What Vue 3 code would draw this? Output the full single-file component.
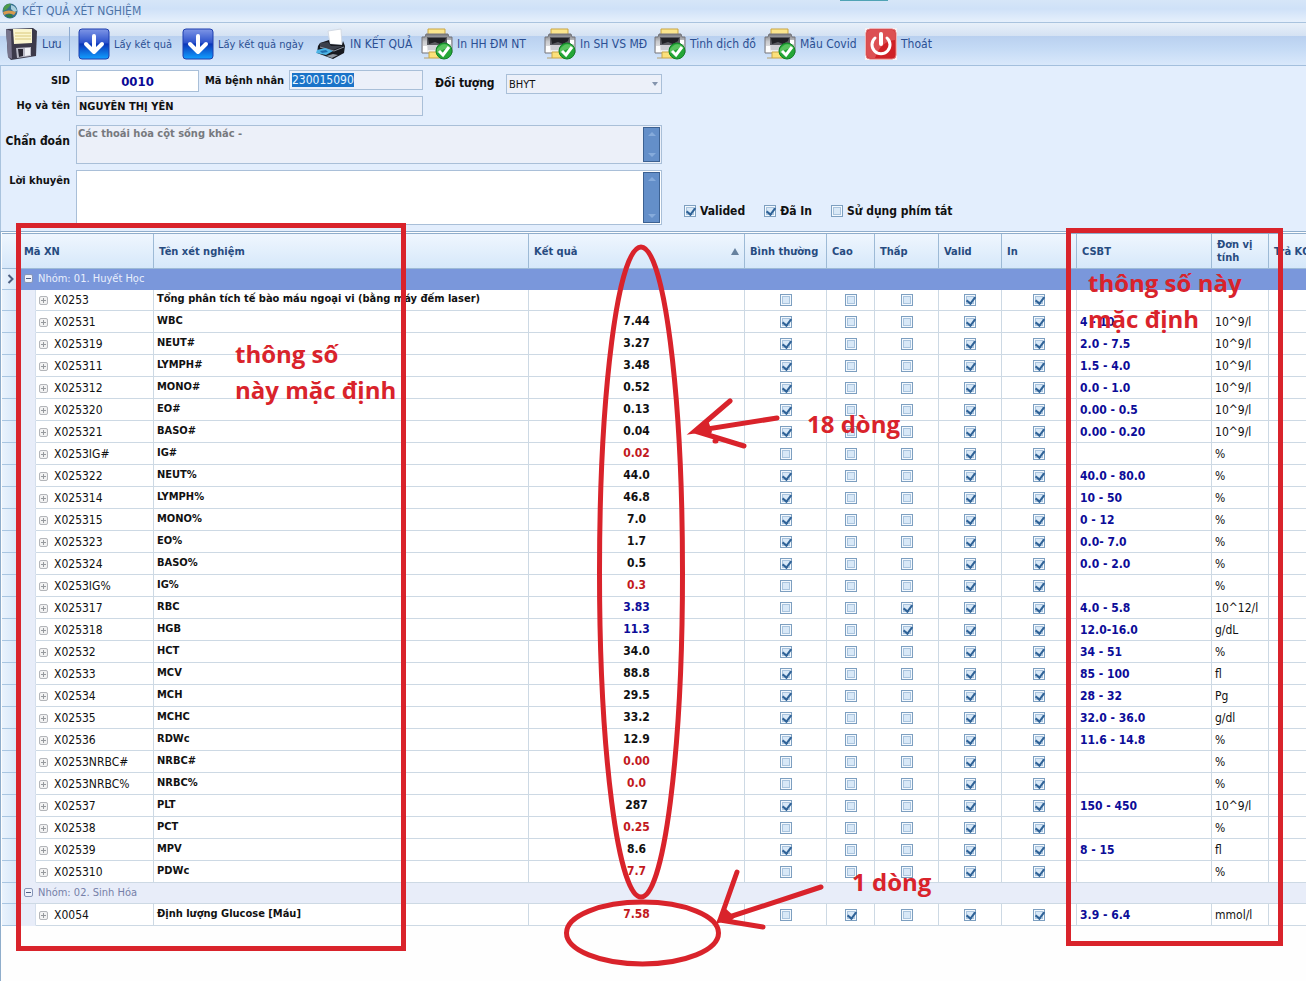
<script setup>
import { onMounted, ref } from 'vue'

const patientInput = ref(null)
const patientId = ref('230015090')
const sid = ref('0010')
const fullName = ref('NGUYỄN THỊ YẾN')
const diagnosis = ref('Các thoái hóa cột sống khác -')
const advice = ref('')
const validated = ref(true)
const printed = ref(true)
const shortcuts = ref(false)

const tools = [
  { icon: 'down', label: 'Lấy kết quả' },
  { icon: 'down', label: 'Lấy kết quả ngày' },
  { icon: 'inkjet', label: 'IN KẾT QUẢ' },
  { icon: 'printer', label: 'In HH ĐM NT' },
  { icon: 'printer', label: 'In SH VS MĐ' },
  { icon: 'printer', label: 'Tinh dịch đồ' },
  { icon: 'printer', label: 'Mẫu Covid' },
  { icon: 'power', label: 'Thoát' }
]

// flag: n = normal, h = high, l = low, x = outside any range
const row = (code, name, value, flag, range, unit) => ({
  code, name, value, range, unit,
  tone: flag === 'l' ? 'low' : flag === 'x' || flag === 'h' ? 'alert' : '',
  checks: { 'Bình thường': flag === 'n', Cao: flag === 'h', 'Thấp': flag === 'l', Valid: true, In: true }
})

const groups = ref([
  {
    title: 'Nhóm: 01. Huyết Học',
    active: true,
    rows: [
      row('X0253', 'Tổng phân tích tế bào máu ngoại vi (bằng máy đếm laser)', '', '', '', ''),
      row('X02531', 'WBC', '7.44', 'n', '4 - 10', '10^9/l'),
      row('X025319', 'NEUT#', '3.27', 'n', '2.0 - 7.5', '10^9/l'),
      row('X025311', 'LYMPH#', '3.48', 'n', '1.5 - 4.0', '10^9/l'),
      row('X025312', 'MONO#', '0.52', 'n', '0.0 - 1.0', '10^9/l'),
      row('X025320', 'EO#', '0.13', 'n', '0.00 - 0.5', '10^9/l'),
      row('X025321', 'BASO#', '0.04', 'n', '0.00 - 0.20', '10^9/l'),
      row('X0253IG#', 'IG#', '0.02', 'x', '', '%'),
      row('X025322', 'NEUT%', '44.0', 'n', '40.0 - 80.0', '%'),
      row('X025314', 'LYMPH%', '46.8', 'n', '10 - 50', '%'),
      row('X025315', 'MONO%', '7.0', 'n', '0 - 12', '%'),
      row('X025323', 'EO%', '1.7', 'n', '0.0- 7.0', '%'),
      row('X025324', 'BASO%', '0.5', 'n', '0.0 - 2.0', '%'),
      row('X0253IG%', 'IG%', '0.3', 'x', '', '%'),
      row('X025317', 'RBC', '3.83', 'l', '4.0 - 5.8', '10^12/l'),
      row('X025318', 'HGB', '11.3', 'l', '12.0-16.0', 'g/dL'),
      row('X02532', 'HCT', '34.0', 'n', '34 - 51', '%'),
      row('X02533', 'MCV', '88.8', 'n', '85 - 100', 'fl'),
      row('X02534', 'MCH', '29.5', 'n', '28 - 32', 'Pg'),
      row('X02535', 'MCHC', '33.2', 'n', '32.0 - 36.0', 'g/dl'),
      row('X02536', 'RDWc', '12.9', 'n', '11.6 - 14.8', '%'),
      row('X0253NRBC#', 'NRBC#', '0.00', 'x', '', '%'),
      row('X0253NRBC%', 'NRBC%', '0.0', 'x', '', '%'),
      row('X02537', 'PLT', '287', 'n', '150 - 450', '10^9/l'),
      row('X02538', 'PCT', '0.25', 'x', '', '%'),
      row('X02539', 'MPV', '8.6', 'n', '8 - 15', 'fl'),
      row('X025310', 'PDWc', '7.7', 'x', '', '%')
    ]
  },
  {
    title: 'Nhóm: 02. Sinh Hóa',
    active: false,
    rows: [row('X0054', 'Định lượng Glucose [Máu]', '7.58', 'h', '3.9 - 6.4', 'mmol/l')]
  }
])

onMounted(() => {
  patientInput.value.focus()
  patientInput.value.select()
})
</script>

<template>
  <main class="window">
    <header class="titlebar">
      <svg class="globe" viewBox="0 0 16 16" aria-hidden="true">
        <circle cx="8" cy="8" r="7.500" fill="#356f8f" />
        <path d="M2 4Q5 0 9 1L7 4 4 7 1 8Z" fill="#4c9a4a" />
        <path d="M9 2Q14 3 15 8L12 9 9 6Z" fill="#a9cfdc" />
        <path d="M1 9Q6 6 14 9L12 12Q7 9 2 12Z" fill="#d99a4c" />
        <path d="M4 12L9 11 11 14Q7 16 4 13Z" fill="#2f7d43" />
      </svg>
      <h1>KẾT QUẢ XÉT NGHIỆM</h1>
      <span class="accent"></span>
    </header>

    <nav class="toolbar">
      <button type="button" class="tool save">
        <svg viewBox="0 0 32 32" aria-hidden="true">
          <path d="M0 1L27 0 31 3 30 28 5 32 2 29Z" fill="#3c3a4a" />
          <path d="M0 1L5 3 6 31 2 29Z" fill="#77748c" />
          <path d="M7 1L26 1 26 15 8 16Z" fill="#fbf6cf" />
          <path d="M9 5H25M9 8H25M9 11H25" stroke="#d9c87c" stroke-width="1" />
          <path d="M10 20L25 19 25 28 11 30Z" fill="#b9bac6" />
          <path d="M12 21L17 21 17 28 13 29Z" fill="#2a2834" />
          <path d="M19 20L24 20 24 27 19 28Z" fill="#eef0f5" />
        </svg>
        <span>Lưu</span>
      </button>
      <span class="divider"></span>
      <button v-for="(tool, i) in tools" :key="i" type="button" class="tool" :class="tool.icon">
        <svg v-if="tool.icon === 'down'" viewBox="0 0 32 32" aria-hidden="true">
          <defs>
            <linearGradient :id="'down' + i" x1="0" y1="0" x2="0" y2="1">
              <stop offset="0" stop-color="#7f96e6" />
              <stop offset=".46" stop-color="#2c52cc" />
              <stop offset=".5" stop-color="#0a35b8" />
              <stop offset="1" stop-color="#12a0ff" />
            </linearGradient>
          </defs>
          <rect x="1" y="1" width="30" height="30" rx="3" :fill="`url(#down${i})`" stroke="#1f3fae" />
          <path d="M16 8V23M8 16L16 24 24 16" fill="none" stroke="#fff" stroke-width="4" stroke-linecap="round" stroke-linejoin="round" />
        </svg>
        <svg v-else-if="tool.icon === 'inkjet'" viewBox="0 0 30 32" aria-hidden="true">
          <path d="M12 3L25 1 26 17 14 16Z" fill="#fff" stroke="#d3dae4" />
          <path d="M4 15L13 12 14 16 26 17 27 13 29 18 28 25 17 31 1 25 2 18Z" fill="#17191f" />
          <path d="M4 15L12 14 15 18 27 18 17 22 4 20Z" fill="#3b404b" />
          <path d="M4 19L18 23 28 19" fill="none" stroke="#8b929f" />
          <path d="M1 22L9 20 17 23 10 27 0 25Z" fill="#4db4e6" />
          <path d="M4 23L10 22 12 24 6 25Z" fill="#1f6fae" />
          <path d="M10 28L17 26 22 27 16 30Z" fill="#8e959f" />
        </svg>
        <svg v-else-if="tool.icon === 'printer'" viewBox="0 0 32 32" aria-hidden="true">
          <defs>
            <linearGradient :id="'body' + i" x1="0" y1="0" x2="0" y2="1">
              <stop offset="0" stop-color="#77787c" />
              <stop offset=".4" stop-color="#c9cacd" />
              <stop offset="1" stop-color="#f7f7f8" />
            </linearGradient>
          </defs>
          <path d="M7 1H24V7H7Z" fill="#fbe68d" stroke="#c9a545" />
          <path d="M5 6H27L28 9H31V25H1V9H4Z" :fill="`url(#body${i})`" stroke="#77777c" />
          <path d="M6 9H26V17H6Z" fill="#5a5b60" />
          <path d="M7 10H25L24 13 19 16 14 14 8 16Z" fill="#202125" />
          <path d="M7 17H25V22H7Z" fill="#cfd0d4" />
          <path d="M2 18H6V24H2ZM26 12H30V16H26Z" fill="#fff" />
          <path d="M8 24H20V30H8Z" fill="#fbe07a" stroke="#c9a545" />
          <path d="M3 30H8" stroke="#b6a06a" />
          <circle cx="23" cy="23" r="8" fill="#24a637" stroke="#118126" />
          <path d="M16 21Q23 12 30 20Q23 20 16 25Z" fill="#6fd06f" opacity=".7" />
          <path d="M18 23L22 27 28 19" fill="none" stroke="#fff" stroke-width="3" />
        </svg>
        <svg v-else viewBox="0 0 32 32" aria-hidden="true">
          <rect width="32" height="32" fill="#f8f1f3" />
          <rect x="1" y="1" width="30" height="30" rx="4" fill="#cf2025" stroke="#e0787a" />
          <path d="M2 5Q2 2 5 2H27Q30 2 30 5V12Q16 13 10 30H5Q2 30 2 27Z" fill="#e36a6b" opacity=".65" />
          <path d="M10 10A9 9 0 1 0 22 10" fill="none" stroke="#fff" stroke-width="3" stroke-linecap="round" />
          <path d="M16 6V16" stroke="#fff" stroke-width="4" stroke-linecap="round" />
        </svg>
        <span>{{ tool.label }}</span>
      </button>
    </nav>

    <form class="panel" @submit.prevent>
      <div class="line top-line">
        <label for="sid" class="lead">SID</label>
        <input id="sid" v-model="sid" class="box sid" type="text" />
        <label for="patient" class="mid">Mã bệnh nhân</label>
        <input id="patient" ref="patientInput" v-model="patientId" class="box patient" type="text" readonly />
        <label for="subject" class="subject-label">Đối tượng</label>
        <span class="subject">
          <select id="subject"><option>BHYT</option></select>
          <svg viewBox="0 0 6 4" aria-hidden="true"><path d="M0 0H6L3 4Z" fill="#8494ad" /></svg>
        </span>
      </div>
      <div class="line name-line">
        <label for="fullname" class="lead">Họ và tên</label>
        <input id="fullname" v-model="fullName" class="box fullname" type="text" readonly />
      </div>
      <div class="line">
        <label for="diagnosis" class="lead large">Chẩn đoán</label>
        <div class="memo muted">
          <textarea id="diagnosis" v-model="diagnosis" readonly></textarea>
          <span class="scroll"><i class="up"></i><i class="down"></i></span>
        </div>
      </div>
      <div class="line">
        <label for="advice" class="lead">Lời khuyên</label>
        <div class="memo tall">
          <textarea id="advice" v-model="advice"></textarea>
          <span class="scroll"><i class="up"></i><i class="down"></i></span>
        </div>
        <div class="options">
          <label><input v-model="validated" type="checkbox" />Valided</label>
          <label><input v-model="printed" type="checkbox" />Đã In</label>
          <label><input v-model="shortcuts" type="checkbox" />Sử dụng phím tắt</label>
        </div>
      </div>
    </form>

    <section class="grid">
      <table>
        <colgroup>
          <col class="c-mark" /><col class="c-indent" /><col class="c-code" /><col class="c-name" /><col class="c-result" />
          <col class="c-normal" /><col class="c-high" /><col class="c-low" /><col class="c-valid" /><col class="c-print" />
          <col class="c-range" /><col class="c-unit" /><col />
        </colgroup>
        <thead>
          <tr>
            <th></th>
            <th colspan="2" class="first">Mã XN</th>
            <th>Tên xét nghiệm</th>
            <th><span class="sorted">Kết quả<i></i></span></th>
            <th>Bình thường</th>
            <th>Cao</th>
            <th>Thấp</th>
            <th>Valid</th>
            <th>In</th>
            <th>CSBT</th>
            <th>Đơn vị<br />tính</th>
            <th>Trả KQ</th>
          </tr>
        </thead>
        <tbody v-for="group in groups" :key="group.title">
          <tr class="group" :class="{ active: group.active }">
            <td class="mark">
              <svg v-if="group.active" viewBox="0 0 6 10" aria-hidden="true"><path d="M1 1L5 5 1 9" fill="none" stroke="#4c5f80" stroke-width="2" /></svg>
            </td>
            <td colspan="12" class="title">
              <button type="button" class="toggle open" aria-label="Thu gọn"></button>{{ group.title }}
            </td>
          </tr>
          <tr v-for="item in group.rows" :key="item.code" :class="{ heading: !item.value }">
            <td class="mark"></td>
            <td class="indent"></td>
            <td class="code"><button type="button" class="toggle" aria-label="Mở rộng"></button>{{ item.code }}</td>
            <td class="name">{{ item.name }}</td>
            <td class="result" :class="item.tone">{{ item.value }}</td>
            <td v-for="(on, key) in item.checks" :key="key" class="check">
              <input v-model="item.checks[key]" type="checkbox" :aria-label="item.code + ' ' + key" />
            </td>
            <td class="range">{{ item.range }}</td>
            <td class="unit">{{ item.unit }}</td>
            <td></td>
          </tr>
        </tbody>
      </table>
    </section>

    <svg class="marks" width="1306" height="981" aria-hidden="true">
      <g fill="none" stroke="#d9232b" stroke-width="5" stroke-linecap="round">
        <rect x="18.500" y="225.500" width="385" height="723" />
        <rect x="1068.500" y="230.500" width="212" height="713" />
        <ellipse cx="641" cy="572" rx="41.500" ry="325" />
        <ellipse cx="642.500" cy="933" rx="76" ry="31" />
        <path d="M777 418L695 431L730 401M695 431L744 446M715 441L716 441" />
        <path d="M821 887L720 920L737 872M720 920L763 927" />
      </g>
      <g fill="#d9232b">
        <path d="M693 432L708 420 712 432 708 437Z" />
        <path d="M717 921L725 908 735 917 730 922Z" />
      </g>
    </svg>
    <p class="note note-left">thông số<br />này mặc định</p>
    <p class="note note-right">thông số này<br />mặc định</p>
    <p class="note note-many">18 dòng</p>
    <p class="note note-one">1 dòng</p>
  </main>
</template>

<style>
body {
  margin: 0;
  background: #fefefe;
}
</style>

<style scoped>
* {
  box-sizing: border-box;
}
.window {
  position: relative;
  min-height: 100vh;
  overflow: hidden;
  display: flex;
  flex-direction: column;
  font-family: "DejaVu Sans Condensed", "DejaVu Sans", "Noto Sans", sans-serif;
  font-size: 12px;
  color: #111;
}
button, input, select, textarea {
  font: inherit;
  color: inherit;
  margin: 0;
}
.titlebar {
  position: relative;
  display: flex;
  align-items: center;
  gap: 4px;
  height: 23px;
  padding: 0 2px;
  border-bottom: 1px solid #a9c3de;
  background: linear-gradient(#d6e6f8, #cfe1f8 40%, #e6f0fc);
}
.titlebar h1 {
  margin: 0;
  font-size: 12px;
  font-weight: normal;
  color: #4d74a8;
}
.globe {
  width: 16px;
  height: 16px;
}
.accent {
  position: absolute;
  top: 0;
  left: 840px;
  width: 48px;
  height: 1px;
  background: #4fa3b5;
}
.toolbar {
  display: grid;
  grid-template-columns: 63px 9px 104px 134px 105px 123px 110px 110px 101px 1fr;
  align-items: center;
  height: 43px;
  padding-left: 6px;
  border-bottom: 1px solid #a3bfdd;
  background: linear-gradient(#e8f0f9, #d5e2f3 30%, #b9d0ef 31%, #c4daf5 60%, #d9e8fb);
}
.tool {
  display: flex;
  align-items: center;
  gap: 4px;
  padding: 0;
  border: 0;
  background: none;
  color: #2b4f93;
  white-space: nowrap;
}
.tool.down {
  font-size: 11px;
}
.tool svg {
  flex: none;
  width: 32px;
  height: 32px;
}
.tool.inkjet svg {
  width: 30px;
}
.divider {
  width: 1px;
  height: 34px;
  background: #8eabd0;
}
.panel {
  display: flex;
  flex-direction: column;
  height: 165px;
  padding-top: 4px;
  border-left: 1px solid #a9c3de;
  background: #e3eefd;
  font-weight: bold;
  font-size: 11px;
}
.line {
  display: flex;
  align-items: flex-start;
}
.line label {
  white-space: nowrap;
}
.top-line {
  height: 26px;
}
.lead {
  width: 69px;
  margin-right: 6px;
  line-height: 22px;
  text-align: right;
}
.lead.large {
  font-size: 12px;
  line-height: 32px;
}
.box {
  border: 1px solid #a9bfd8;
  border-radius: 0;
  background: #ecf0f9;
  outline: none;
}
.sid {
  width: 123px;
  height: 22px;
  background: #fff;
  color: #0a0a96;
  text-align: center;
  font-size: 13px;
}
.mid {
  width: 90px;
  padding-left: 6px;
  line-height: 22px;
}
.patient {
  width: 134px;
  height: 20px;
  padding: 0 2px;
  font-weight: normal;
  font-size: 12px;
}
.patient::selection {
  background: #1a73c8;
  color: #e8f6ff;
}
.subject-label {
  width: 83px;
  padding-left: 12px;
  font-size: 12px;
  line-height: 26px;
}
.subject {
  position: relative;
  margin-top: 4px;
}
.subject select {
  display: block;
  width: 156px;
  height: 20px;
  padding: 0 2px;
  border: 1px solid #a9bfd8;
  border-radius: 0;
  background: #ecf0f9;
  appearance: none;
  font-weight: normal;
}
.subject svg {
  position: absolute;
  right: 4px;
  top: 8px;
  width: 6px;
  height: 4px;
}
.name-line {
  height: 29px;
}
.name-line .lead {
  line-height: 20px;
}
.fullname {
  width: 347px;
  height: 20px;
  padding: 0 2px;
  font-size: 11px;
}
.memo {
  display: flex;
  width: 586px;
  height: 39px;
  margin-bottom: 6px;
  padding: 1px;
  border: 1px solid #a9bfd8;
  background: #fff;
}
.memo.muted {
  background: #ecf0f9;
  color: #77797e;
}
.memo.tall {
  height: 55px;
  margin: 0;
}
.memo textarea {
  flex: 1;
  padding: 0;
  border: 0;
  background: none;
  outline: none;
  resize: none;
  overflow: hidden;
  line-height: 14px;
}
.scroll {
  display: flex;
  flex-direction: column;
  align-items: center;
  justify-content: space-between;
  width: 17px;
  padding: 4px 0;
  border: 1px solid #3c6192;
  background: #648fc9;
}
.scroll i {
  border: 4px solid transparent;
}
.scroll .up {
  border-top: 0;
  border-bottom-color: #86abdb;
}
.scroll .down {
  border-bottom: 0;
  border-top-color: #86abdb;
}
.options {
  display: flex;
  align-items: center;
  gap: 19px;
  padding: 32px 0 0 22px;
  font-size: 12px;
}
.options label {
  display: flex;
  align-items: center;
  gap: 4px;
  line-height: 18px;
}
input[type="checkbox"] {
  display: block;
  flex: none;
  width: 12px;
  height: 12px;
  border: 1px solid #7d9fc0;
  appearance: none;
  background: #d8e8f7;
  box-shadow: inset 0 0 0 1px #f4f9fe, inset 0 0 0 2px #a9c4de;
}
input[type="checkbox"]:checked::before {
  content: "";
  display: block;
  width: 4px;
  height: 7px;
  margin: 0 0 0 3px;
  border: solid #2f6297;
  border-width: 0 2px 2px 0;
  transform: rotate(38deg);
}
.grid {
  flex: 1;
  padding: 1px 0 0 1px;
  border-top: 1px solid #8fadcb;
  border-left: 1px solid #8fadcb;
}
table {
  width: 100%;
  table-layout: fixed;
  border-collapse: separate;
  border-spacing: 0;
  border-top: 1px solid #8fadcb;
}
.c-mark { width: 18px; }
.c-indent { width: 16px; }
.c-code { width: 118px; }
.c-name { width: 375px; }
.c-result { width: 216px; }
.c-normal { width: 82px; }
.c-high { width: 48px; }
.c-low { width: 64px; }
.c-valid { width: 63px; }
.c-print { width: 75px; }
.c-range { width: 135px; }
.c-unit { width: 57px; }
th {
  height: 35px;
  padding: 0 5px;
  border-right: 1px solid #9dbad6;
  border-bottom: 1px solid #9dbad6;
  background: linear-gradient(#eff6fe, #d6e8fa);
  color: #274b80;
  font-size: 11px;
  line-height: 13px;
  text-align: left;
  white-space: nowrap;
}
th:last-child, td:last-child {
  border-right: 0;
}
th.first {
  padding-left: 4px;
}
.sorted {
  display: flex;
  justify-content: space-between;
  align-items: center;
}
.sorted i {
  border: 4px solid transparent;
  border-top: 0;
  border-bottom: 7px solid #66819f;
}
td {
  height: 22px;
  padding: 0 3px;
  border-right: 1px solid #cdd9e4;
  border-bottom: 1px solid #cdd9e4;
  background: #fff;
  line-height: 18px;
  white-space: nowrap;
}
.heading td, .group td {
  height: 21px;
}
.mark, .group .mark {
  padding: 0 0 0 5px;
  border-color: #a9c6e2;
  background: linear-gradient(90deg, #eaf3fd, #d3e5f8);
}
.mark svg {
  display: block;
  width: 7px;
  height: 10px;
}
.group .title {
  padding-left: 4px;
  border-right: 0;
  background: #e8edf9;
  color: #7680a8;
  font-size: 11px;
}
.group.active .title {
  border-color: #7a97db;
  background: #7a97db;
  color: #e9effc;
}
.indent {
  border-bottom-color: #e8edf9;
  border-right-color: #d5dfec;
  background: #e8edf9;
}
.toggle {
  display: inline-block;
  width: 9px;
  height: 9px;
  margin-right: 6px;
  padding: 0;
  border: 1px solid #b3b5b9;
  border-radius: 2px;
  background:
    linear-gradient(#96999d, #96999d) center / 5px 1px no-repeat,
    linear-gradient(#96999d, #96999d) center / 1px 5px no-repeat,
    #f2f2f2;
}
.toggle.open {
  margin-right: 5px;
  border-color: #8796b8;
  background: linear-gradient(#4f5f85, #4f5f85) center / 5px 1px no-repeat, #eef2fb;
}
.name, .result {
  padding-bottom: 2px;
  font-weight: bold;
}
.name {
  font-size: 11px;
}
.result {
  text-align: center;
}
.result.alert {
  color: #c2191d;
}
.result.low, .range {
  color: #0c0c98;
}
.range {
  font-weight: bold;
}
.check input {
  margin: 0 auto;
}
.marks {
  position: absolute;
  top: 0;
  left: 0;
  pointer-events: none;
}
.note {
  position: absolute;
  margin: 0;
  color: #d9232b;
  font-family: "Open Sans", "Noto Sans", sans-serif;
  font-size: 24px;
  font-weight: bold;
  line-height: 36px;
  white-space: nowrap;
  pointer-events: none;
}
.note-left { left: 235px; top: 336px; }
.note-right { left: 1088px; top: 265px; }
.note-many { left: 807px; top: 406px; }
.note-one { left: 852px; top: 864px; }
</style>
